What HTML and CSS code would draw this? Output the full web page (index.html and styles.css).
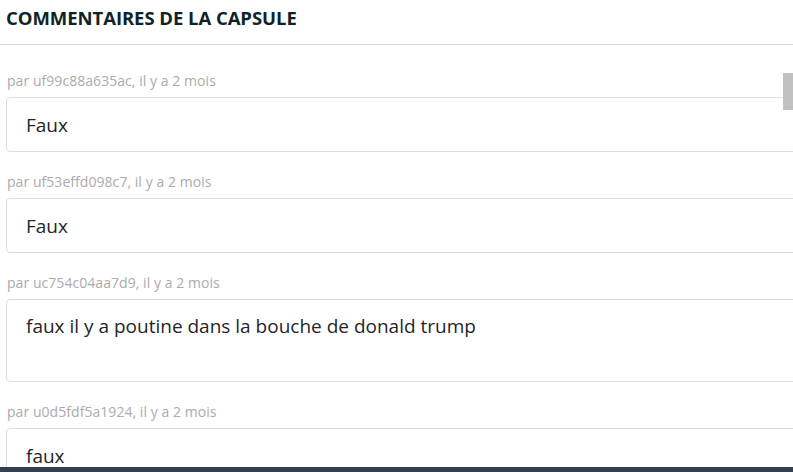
FILE: index.html
```html
<!DOCTYPE html>
<html lang="fr">
<head>
<meta charset="utf-8">
<link rel="stylesheet" href="styles.css">
</head>
<body>
<div class="panel">
  <header class="panel-header">
    <h2 class="title">COMMENTAIRES DE LA CAPSULE</h2>
  </header>
  <div class="comments">
    <div class="comment">
      <div class="meta">par uf99c88a635ac, il y a 2 mois</div>
      <div class="bubble">Faux</div>
    </div>
    <div class="comment">
      <div class="meta">par uf53effd098c7, il y a 2 mois</div>
      <div class="bubble">Faux</div>
    </div>
    <div class="comment">
      <div class="meta">par uc754c04aa7d9, il y a 2 mois</div>
      <div class="bubble bubble-tall">faux il y a poutine dans la bouche de donald trump</div>
    </div>
    <div class="comment">
      <div class="meta">par u0d5fdf5a1924, il y a 2 mois</div>
      <div class="bubble">faux</div>
    </div>
    <div class="scroll-thumb"></div>
  </div>
  <div class="bottom-bar"></div>
</div>
</body>
</html>
```
FILE: styles.css
```css
html, body {
  margin: 0;
  padding: 0;
  background: #fff;
  overflow: hidden;
}
body {
  font-family: "Open Sans", "Noto Sans", sans-serif;
  color: #1f2528;
}
.panel {
  position: relative;
  width: 793px;
  height: 472px;
  overflow: hidden;
  display: flex;
  flex-direction: column;
}
.panel-header {
  height: 44px;
  border-bottom: 1px solid #dcdcdc;
  display: flex;
  align-items: center;
  padding-left: 6px;
  flex-shrink: 0;
}
.title {
  margin: 0;
  font-size: 18.5px;
  font-weight: 700;
  color: #0f2327;
  letter-spacing: -0.05px;
  position: relative;
  top: -5px;
}
.comments {
  position: relative;
  flex: 1;
  padding: 26px 0 0 6px;
  display: flex;
  flex-direction: column;
  gap: 20px;
  overflow: hidden;
}
.comment {
  display: flex;
  flex-direction: column;
  gap: 6px;
}
.meta {
  font-size: 14px;
  line-height: 20px;
  color: #ababab;
  padding-left: 1px;
  letter-spacing: 0.05px;
}
.bubble {
  width: 820px;
  box-sizing: border-box;
  height: 55px;
  border: 1px solid #dedede;
  border-radius: 4px;
  padding: 15px 19px;
  font-size: 19px;
  line-height: 24px;
  color: #1f2528;
}
.bubble-tall {
  height: 83px;
  padding-top: 14px;
}
.scroll-thumb {
  position: absolute;
  right: 0;
  top: 28px;
  width: 10px;
  height: 37px;
  background: #c1c1c1;
}
.bottom-bar {
  position: absolute;
  left: 0;
  right: 0;
  bottom: 0;
  height: 5px;
  background: #343e50;
}
```
